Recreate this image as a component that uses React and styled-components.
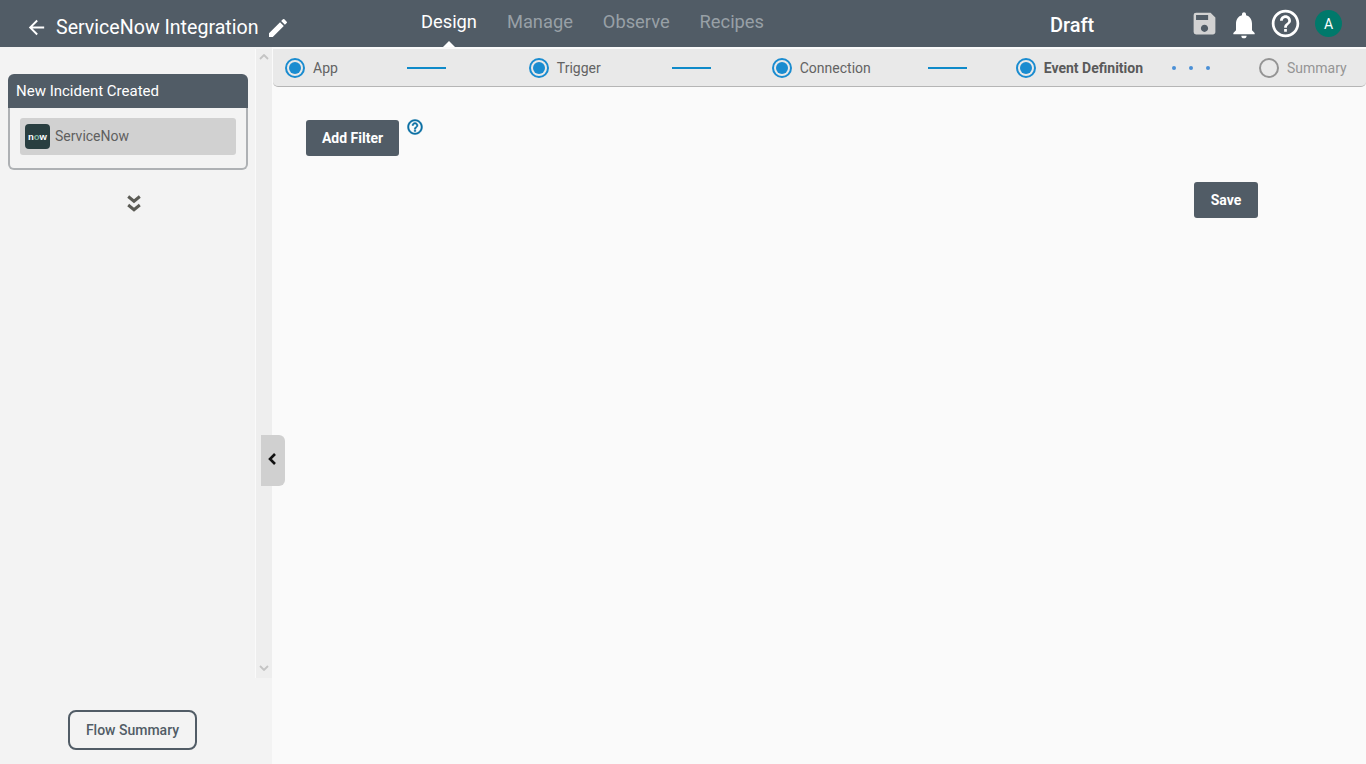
import styled, { createGlobalStyle } from "styled-components";
import { MdEdit, MdSave, MdNotifications, MdHelpOutline, MdArrowBack } from "react-icons/md";

const steps = [
  { label: "App", state: "done", after: { left: 69, right: 83 } },
  { label: "Trigger", state: "done", after: { left: 71, right: 61 } },
  { label: "Connection", state: "done", after: { left: 57, right: 49 } },
  { label: "Event Definition", state: "current", dots: true },
  { label: "Summary", state: "todo" },
];

export default function App() {
  return (
    <>
      <GlobalStyle />
      <Page>
        <Header>
          <TitleBlock>
            <BackIcon />
            <Title>ServiceNow Integration</Title>
            <EditIcon />
          </TitleBlock>
          <Nav>
            <NavItem $active>Design</NavItem>
            <NavItem>Manage</NavItem>
            <NavItem>Observe</NavItem>
            <NavItem>Recipes</NavItem>
          </Nav>
          <Status>Draft</Status>
          <Actions>
            <SaveIcon />
            <BellIcon />
            <HelpIcon />
            <Avatar>A</Avatar>
          </Actions>
        </Header>

        <Body>
          <Sidebar>
            <SideScroll>
              <SideContent>
                <FlowCard>
                  <FlowCardTitle>New Incident Created</FlowCardTitle>
                  <FlowCardBody>
                    <AppChip>
                      <NowLogo>n<em>o</em>w</NowLogo>
                      ServiceNow
                    </AppChip>
                  </FlowCardBody>
                </FlowCard>
                <MoreIcon viewBox="0 0 14 18">
                  <path d="M1.2 1.5 L7 6.2 L12.8 1.5 M1.2 10 L7 14.7 L12.8 10" />
                </MoreIcon>
              </SideContent>
              <ScrollTrack>
                <ScrollArrow viewBox="0 0 10 6"><path d="M1 5 L5 1 L9 5" /></ScrollArrow>
                <ScrollArrow viewBox="0 0 10 6"><path d="M1 1 L5 5 L9 1" /></ScrollArrow>
              </ScrollTrack>
            </SideScroll>
            <SideFooter>
              <SummaryButton>Flow Summary</SummaryButton>
            </SideFooter>
            <CollapseTab>
              <svg width="10" height="14" viewBox="0 0 10 14">
                <path d="M8 2 L3 7 L8 12" fill="none" stroke="#111" strokeWidth="2.6" />
              </svg>
            </CollapseTab>
          </Sidebar>

          <Main>
            <Stepper>
              {steps.map((s) => (
                <StepGroup key={s.label}>
                  <Step>
                    <Radio $state={s.state} />
                    <StepLabel $state={s.state}>{s.label}</StepLabel>
                  </Step>
                  {s.after && <Connector $left={s.after.left} $right={s.after.right} />}
                  {s.dots && (
                    <Dots>
                      <Dot />
                      <Dot />
                      <Dot />
                    </Dots>
                  )}
                </StepGroup>
              ))}
            </Stepper>
            <Content>
              <FilterRow>
                <DarkButton>Add Filter</DarkButton>
                <HintIcon />
              </FilterRow>
              <SaveRow>
                <DarkButton $small>Save</DarkButton>
              </SaveRow>
            </Content>
          </Main>
        </Body>
      </Page>
    </>
  );
}

const GlobalStyle = createGlobalStyle`
  html, body {
    margin: 0;
    height: 100%;
    background: #fafafa;
    font-family: Roboto, "Liberation Sans", sans-serif;
  }
  * {
    box-sizing: border-box;
  }
`;
const Page = styled.div`
  width: 1366px;
  height: 764px;
  display: flex;
  flex-direction: column;
  overflow: hidden;
`;
const Header = styled.header`
  height: 47px;
  flex-shrink: 0;
  background-color: #515c66;
  color: #fff;
  display: flex;
  align-items: center;
`;
const TitleBlock = styled.div`
  width: 421px;
  padding: 8px 0 0 25px;
  display: flex;
  align-items: center;
`;
const BackIcon = styled(MdArrowBack)`
  width: 23px;
  height: 23px;
`;
const Title = styled.span`
  margin: 1px 0 0 8px;
  font-size: 19.6px;
  line-height: 24px;
`;
const EditIcon = styled(MdEdit)`
  width: 24px;
  height: 24px;
  margin-left: 7px;
`;
const Nav = styled.nav`
  width: 629px;
  height: 47px;
  display: flex;
  gap: 30px;
`;
const NavItem = styled.span`
  position: relative;
  height: 47px;
  padding-top: 11px;
  font-size: 18.3px;
  line-height: 22px;
  color: ${(p) => (p.$active ? "#fff" : "#98a0a6")};

  ${(p) =>
    p.$active &&
    `&::after {
      content: "";
      position: absolute;
      left: 50%;
      bottom: 0;
      margin-left: -6px;
      border-left: 6px solid transparent;
      border-right: 6px solid transparent;
      border-bottom: 6px solid #fff;
    }`}
`;
const Status = styled.span`
  width: 140px;
  padding-top: 3px;
  font-size: 20px;
  font-weight: 500;
`;
const Actions = styled.div`
  display: flex;
  align-items: center;
`;
const SaveIcon = styled(MdSave)`
  width: 29px;
  height: 29px;
  color: #d2d2d2;
`;
const BellIcon = styled(MdNotifications)`
  width: 32px;
  height: 32px;
  margin-left: 9px;
  margin-top: 2px;
`;
const HelpIcon = styled(MdHelpOutline)`
  width: 33px;
  height: 33px;
  margin-left: 9px;
`;
const Avatar = styled.div`
  width: 27px;
  height: 27px;
  margin-left: 13px;
  border-radius: 50%;
  background-color: #00796b;
  font-size: 14px;
  display: flex;
  align-items: center;
  justify-content: center;
`;
const Body = styled.div`
  flex: 1;
  min-height: 0;
  display: flex;
`;
const Sidebar = styled.aside`
  position: relative;
  width: 272px;
  flex-shrink: 0;
  background-color: #f3f3f3;
  display: flex;
  flex-direction: column;
`;
const SideScroll = styled.div`
  height: 631px;
  padding-top: 2px;
  display: flex;
`;
const SideContent = styled.div`
  width: 255px;
  padding: 25px 7px 0 8px;
  display: flex;
  flex-direction: column;
`;
const FlowCard = styled.div`
  width: 240px;
  height: 96px;
  display: flex;
  flex-direction: column;
`;
const FlowCardTitle = styled.div`
  height: 34px;
  padding-left: 8px;
  border-radius: 6px 6px 0 0;
  background-color: #515c66;
  color: #fff;
  font-size: 15px;
  line-height: 34px;
`;
const FlowCardBody = styled.div`
  flex: 1;
  padding: 10px 10px;
  border: 2px solid #aeb1b4;
  border-top: 0;
  border-radius: 0 0 6px 6px;
`;
const AppChip = styled.div`
  height: 37px;
  padding: 0 0 1px 5px;
  border-radius: 3px;
  background-color: #d1d1d1;
  color: #5f5f5f;
  font-size: 14px;
  display: flex;
  align-items: center;
  gap: 5px;
`;
const NowLogo = styled.span`
  width: 25px;
  height: 25px;
  border-radius: 4px;
  background-color: #293e40;
  color: #fff;
  font-family: "Liberation Sans", sans-serif;
  font-size: 9.5px;
  font-weight: 700;
  display: flex;
  align-items: center;
  justify-content: center;

  em {
    color: #81b5a1;
    font-style: normal;
  }
`;
const MoreIcon = styled.svg`
  width: 14px;
  height: 18px;
  margin: 25px 0 0 119px;
  fill: none;
  stroke: #5b5b55;
  stroke-width: 3;
`;
const ScrollTrack = styled.div`
  width: 17px;
  padding: 5px 3px 7px;
  background-color: #eee;
  border-left: 1px solid #fafafa;
  display: flex;
  flex-direction: column;
  justify-content: space-between;
`;
const ScrollArrow = styled.svg`
  width: 10px;
  height: 6px;
  fill: none;
  stroke: #c4c4c4;
  stroke-width: 1.8;
`;
const SideFooter = styled.div`
  flex: 1;
  padding: 32px 0 0 68px;
`;
const SummaryButton = styled.button`
  width: 129px;
  height: 40px;
  padding: 0;
  border: 2px solid #515c66;
  border-radius: 8px;
  background: transparent;
  color: #515c66;
  font-family: inherit;
  font-size: 14px;
  font-weight: 500;
`;
const CollapseTab = styled.div`
  position: absolute;
  left: 261px;
  top: 388px;
  width: 24px;
  height: 51px;
  padding: 0 2px 4px 0;
  border-radius: 0 6px 6px 0;
  background-color: #d0d0d0;
  display: flex;
  align-items: center;
  justify-content: center;
`;
const Main = styled.main`
  flex: 1;
  min-width: 0;
  padding-top: 2px;
  background-color: #fafafa;
`;
const Stepper = styled.div`
  height: 38px;
  margin-left: 1px;
  padding-left: 12px;
  border-bottom: 1px solid #b5b5b5;
  border-radius: 0 0 5px 5px;
  background-color: #e9e9e9;
  display: flex;
  align-items: center;
`;
const StepGroup = styled.div`
  display: flex;
  align-items: center;
`;
const Step = styled.div`
  display: flex;
  align-items: center;
  gap: 8px;
`;
const Radio = styled.span`
  position: relative;
  width: 20px;
  height: 20px;
  border-radius: 50%;
  border: 2px solid ${(p) => (p.$state === "todo" ? "#949494" : "#1a8cd0")};

  ${(p) =>
    p.$state !== "todo" &&
    `&::after {
      content: "";
      position: absolute;
      inset: 2px;
      border-radius: 50%;
      background-color: #1a8cd0;
    }`}
`;
const StepLabel = styled.span`
  font-size: 14px;
  font-weight: ${(p) => (p.$state === "current" ? 700 : 400)};
  color: ${(p) =>
    p.$state === "todo" ? "#959595" : p.$state === "current" ? "#5a5a5a" : "#636363"};
`;
const Connector = styled.span`
  width: 39px;
  height: 2px;
  margin: 0 ${(p) => p.$right}px 0 ${(p) => p.$left}px;
  background-color: #0f8ac9;
`;
const Dots = styled.span`
  width: 42px;
  margin: 0 47px 0 27px;
  display: flex;
  justify-content: space-between;
  padding: 0 2px;
`;
const Dot = styled.span`
  width: 4px;
  height: 4px;
  border-radius: 50%;
  background-color: #4a8fd6;
`;
const Content = styled.div`
  padding: 33px 0 0 34px;
`;
const FilterRow = styled.div`
  display: flex;
  align-items: flex-start;
`;
const DarkButton = styled.button`
  width: ${(p) => (p.$small ? 64 : 93)}px;
  height: 36px;
  padding: 0;
  border: 0;
  border-radius: 3px;
  background-color: #515c66;
  color: #fff;
  font-family: inherit;
  font-size: 14px;
  font-weight: 700;
`;
const HintIcon = styled(MdHelpOutline)`
  width: 18px;
  height: 18px;
  margin: -2px 0 0 7px;
  color: #0b6fa4;
  stroke: currentColor;
  stroke-width: 0.6;

  path[fill="none"] {
    stroke: none;
  }
`;
const SaveRow = styled.div`
  padding: 26px 0 0 888px;
`;
